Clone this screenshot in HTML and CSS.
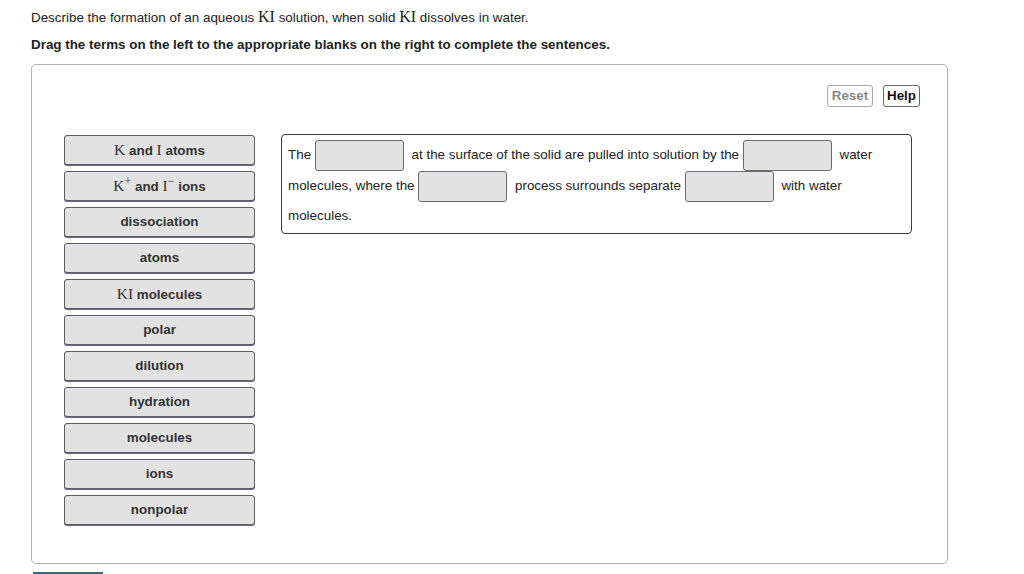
FILE: index.html
```html
<!DOCTYPE html>
<html>
<head>
<meta charset="utf-8">
<link rel="stylesheet" href="styles.css">
</head>
<body>
<div class="page">
  <p class="intro">Describe the formation of an aqueous <span class="m">KI</span> solution, when solid <span class="m">KI</span> dissolves in water.</p>
  <p class="instr">Drag the terms on the left to the appropriate blanks on the right to complete the sentences.</p>
  <div class="panel">
    <div class="tools">
      <button class="btn reset">Reset</button>
      <button class="btn help">Help</button>
    </div>
    <div class="work">
      <div class="terms">
        <div class="term"><span class="m">K</span> and <span class="m">I</span> atoms</div>
        <div class="term"><span class="m">K<sup>+</sup></span> and <span class="m">I<sup>−</sup></span> ions</div>
        <div class="term">dissociation</div>
        <div class="term">atoms</div>
        <div class="term"><span class="m">KI</span> molecules</div>
        <div class="term">polar</div>
        <div class="term">dilution</div>
        <div class="term">hydration</div>
        <div class="term">molecules</div>
        <div class="term">ions</div>
        <div class="term">nonpolar</div>
      </div>
      <div class="sentence">The <span class="blank"></span> at the surface of the solid are pulled into solution by the <span class="blank"></span> water molecules, where the <span class="blank"></span> process surrounds separate <span class="blank"></span> with water molecules.</div>
    </div>
  </div>
  <div class="next"></div>
</div>
</body>
</html>
```

FILE: styles.css
```css
html, body {
  margin: 0;
  padding: 0;
  background: #fff;
}
.page {
  padding: 8px 0 0 31px;
  font-family: "Liberation Sans", Arial, sans-serif;
  color: #222;
  width: 917px;
}
.intro {
  margin: 0;
  font-size: 13.4px;
  line-height: 18px;
}
.instr {
  margin: 9px 0 10px 0;
  font-size: 13.4px;
  line-height: 18px;
  font-weight: bold;
}
.m {
  font-family: "Liberation Serif", "Times New Roman", serif;
  font-size: 16px;
  font-weight: normal;
}
.term .m {
  font-size: 15.5px;
}
.m sup {
  font-size: 12px;
  line-height: 0;
  vertical-align: 6px;
}
.panel {
  border: 1px solid #b0b0b0;
  border-radius: 5px;
  padding: 20px 27px 38px 32px;
}
.tools {
  display: flex;
  justify-content: flex-end;
  gap: 10px;
  height: 22px;
}
.btn {
  font-family: "Liberation Sans", Arial, sans-serif;
  font-size: 13.4px;
  font-weight: bold;
  background: #fff;
  border-radius: 3px;
  padding: 0 3px;
  height: 22px;
  line-height: 20px;
  margin: 0;
}
.reset {
  color: #888;
  border: 1px solid #a8a8a8;
  width: 46px;
}
.help {
  color: #111;
  border: 1px solid #666;
  width: 37px;
}
.work {
  display: flex;
  align-items: flex-start;
  gap: 26px;
  margin-top: 27px;
}
.terms {
  display: flex;
  flex-direction: column;
  gap: 6px;
  width: 191px;
  margin-top: 1px;
}
.term {
  box-sizing: border-box;
  height: 30px;
  background: #e2e2e2;
  border: 1px solid #5c5c66;
  border-radius: 3px;
  box-shadow: 0 1px 0 #6a6a72;
  font-size: 13.4px;
  font-weight: bold;
  color: #333;
  text-align: center;
  line-height: 27px;
}
.sentence {
  box-sizing: border-box;
  width: 631px;
  border: 1.5px solid #3c3c44;
  border-radius: 4px;
  padding: 5px 24px 3px 6px;
  font-size: 13.4px;
  line-height: 28px;
  color: #222;
}
.blank {
  display: inline-block;
  box-sizing: border-box;
  width: 89px;
  height: 31px;
  background: #e2e2e2;
  border: 1px solid #6a6a72;
  border-radius: 3px;
  vertical-align: middle;
  margin-right: 4px;
}
.next {
  width: 70px;
  height: 2px;
  background: #2a6e86;
  margin: 8px 0 0 2px;
}
```
